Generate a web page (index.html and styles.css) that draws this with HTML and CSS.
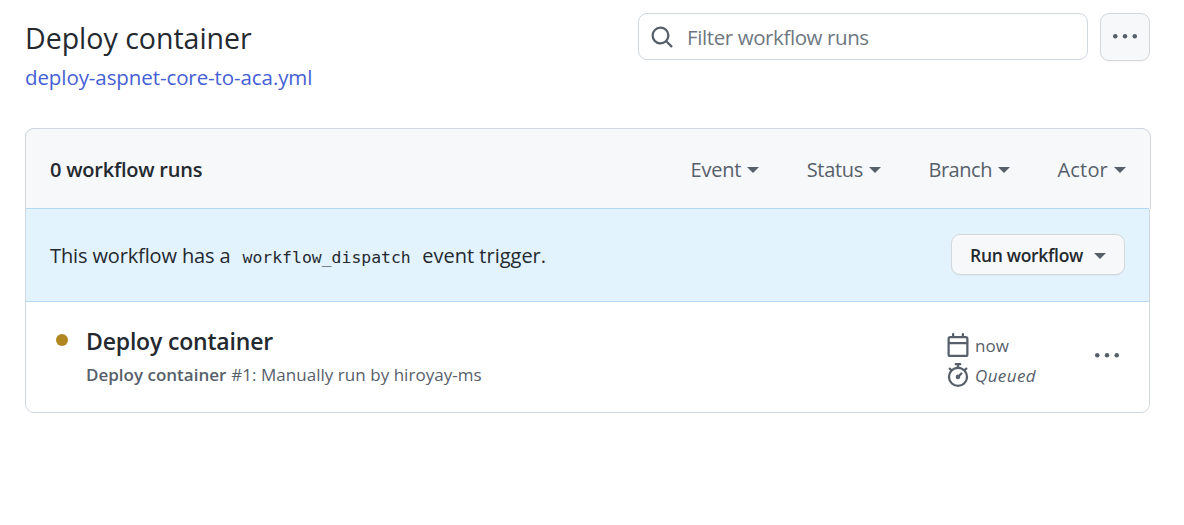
FILE: index.html
```html
<!DOCTYPE html>
<html lang="en">
<head>
<meta charset="utf-8">
<title>Deploy container</title>
<link rel="stylesheet" href="styles.css">
</head>
<body>
<main class="page">
  <header class="top">
    <div class="heading">
      <h1 class="title"><span>Deploy container</span></h1>
      <a class="file"><span>deploy-aspnet-core-to-aca.yml</span></a>
    </div>
    <div class="search">
      <svg class="icon" viewBox="0 0 16 16"><path d="M10.68 11.74a6 6 0 0 1-7.922-8.982 6 6 0 0 1 8.982 7.922l3.04 3.04a.749.749 0 0 1-.326 1.275.749.749 0 0 1-.734-.215ZM11.5 7a4.499 4.499 0 1 0-8.997 0A4.499 4.499 0 0 0 11.5 7Z"/></svg>
      <span class="placeholder">Filter workflow runs</span>
    </div>
    <div class="more">
      <svg class="icon" viewBox="0 0 16 16"><circle cx="1.5" cy="7.5" r="1.5"/><circle cx="8" cy="7.5" r="1.5"/><circle cx="14.5" cy="7.5" r="1.5"/></svg>
    </div>
  </header>

  <section class="card">
    <div class="card-head">
      <strong class="count">0 workflow runs</strong>
      <nav class="filters">
        <span class="filter"><span class="event">Event</span><i class="caret"></i></span>
        <span class="filter"><span class="status">Status</span><i class="caret"></i></span>
        <span class="filter"><span class="branch">Branch</span><i class="caret"></i></span>
        <span class="filter"><span class="actor">Actor</span><i class="caret"></i></span>
      </nav>
    </div>
    <div class="dispatch">
      <div class="message"><span class="lead">This workflow has a</span><code class="code">workflow_dispatch</code><span class="tail">event trigger.</span></div>
      <div class="run-button"><span>Run workflow</span><i class="caret"></i></div>
    </div>
    <div class="run">
      <i class="dot"></i>
      <div class="run-info">
        <div class="run-title"><span>Deploy container</span></div>
        <div class="run-sub"><b class="run-name">Deploy container</b><span class="run-desc">#1: Manually run by hiroyay-ms</span></div>
      </div>
      <div class="meta">
        <div class="meta-row">
          <svg class="icon" viewBox="0 0 16 16"><path d="M4.75 0a.75.75 0 0 1 .75.75V2h5V.75a.75.75 0 0 1 1.5 0V2h1.25c.966 0 1.75.784 1.75 1.75v10.5A1.75 1.75 0 0 1 13.25 16H2.75A1.75 1.75 0 0 1 1 14.25V3.75C1 2.784 1.784 2 2.75 2H4V.75A.75.75 0 0 1 4.75 0ZM2.5 7.5v6.75c0 .138.112.25.25.25h10.5a.25.25 0 0 0 .25-.25V7.5Zm10.75-4H2.75a.25.25 0 0 0-.25.25V6h11V3.75a.25.25 0 0 0-.25-.25Z"/></svg>
          <span class="now">now</span>
        </div>
        <div class="meta-row">
          <svg class="icon" viewBox="0 0 16 16"><path d="M5.75.75A.75.75 0 0 1 6.5 0h3a.75.75 0 0 1 0 1.5h-.75v1l-.001.041a6.724 6.724 0 0 1 3.464 1.435l.007-.006.75-.75a.749.749 0 0 1 1.275.326.749.749 0 0 1-.215.734l-.75.75-.006.007a6.75 6.75 0 1 1-10.548 0L2.72 5.03l-.75-.75a.751.751 0 0 1 .018-1.042.751.751 0 0 1 1.042-.018l.75.75.007.006A6.72 6.72 0 0 1 7.25 2.541V1.5H6.5a.75.75 0 0 1-.75-.75ZM8 14.5a5.25 5.25 0 1 0 0-10.5 5.25 5.25 0 0 0 0 10.5Zm.389-6.7 1.33-1.33a.75.75 0 1 1 1.061 1.06L9.45 8.861A1.503 1.503 0 0 1 8 10.75a1.499 1.499 0 1 1 .389-2.95Z"/></svg>
          <em class="queued">Queued</em>
        </div>
      </div>
      <svg class="icon run-more" viewBox="0 0 16 16"><circle cx="1.5" cy="7.5" r="1.5"/><circle cx="8" cy="7.5" r="1.5"/><circle cx="14.5" cy="7.5" r="1.5"/></svg>
    </div>
  </section>
</main>
</body>
</html>
```
FILE: styles.css
```css
* { box-sizing: border-box; }
body {
  margin: 0;
  background: #fff;
  color: #24292f;
  font-family: "Open Sans", "Noto Sans", sans-serif;
  font-size: 20px;
  white-space: nowrap;
}
.page { padding: 13px 34px 0 25px; }
.icon { display: block; flex: none; width: 24px; height: 24px; fill: #57606a; }
.caret {
  flex: none;
  border: 6px solid transparent;
  border-top-color: #57606a;
  border-bottom: 0;
}

.top { display: flex; align-items: flex-start; height: 115px; }
.heading { width: 613px; }
.title { margin: 0; font-size: 28.5px; font-weight: 400; line-height: 50px; }
.file { display: block; color: #4560d4; font-size: 20.5px; letter-spacing: -.09px; line-height: 28px; }
.search {
  display: flex;
  align-items: center;
  gap: 13px;
  width: 450px;
  height: 47px;
  padding-left: 11px;
  border: 1px solid #d0d7de;
  border-radius: 9px;
}
.placeholder { padding-top: 1px; color: #6e7781; font-size: 20.5px; letter-spacing: -.4px; }
.more {
  display: flex;
  align-items: center;
  justify-content: center;
  width: 50px;
  height: 48px;
  margin-left: 12px;
  border: 1px solid #d5d8da;
  border-radius: 9px;
  background: #f6f8fa;
  box-shadow: 0 1px 0 rgba(27, 31, 36, .04);
}

.card {
  width: 1125px;
  height: 285px;
  border: 1px solid #d0d7de;
  border-radius: 9px;
}
.card-head {
  display: flex;
  align-items: center;
  justify-content: space-between;
  width: 1126px;
  height: 81px;
  margin: -1px 0 0 -1px;
  padding: 1px 24px 0 24px;
  border: 1px solid #d0d7de;
  border-bottom: 0;
  border-radius: 9px 9px 0 0;
  background: #f6f8fa;
}
.count { font-weight: 600; letter-spacing: -.22px; }
.filters { display: flex; gap: 47.4px; color: #57606a; }
.filter { display: flex; align-items: center; gap: 6px; }
.filter .caret { margin-top: 1px; }
.event { letter-spacing: -.2px; }
.status { letter-spacing: -.3px; }
.branch { letter-spacing: -.45px; }
.actor { letter-spacing: .2px; }
.dispatch {
  display: flex;
  align-items: center;
  justify-content: space-between;
  height: 94px;
  margin-top: -1px;
  padding: 0 24px;
  border: solid #b6d9f8;
  border-width: 1px 0;
  background: #e2f3fe;
}
.message { display: flex; align-items: baseline; }
.lead { letter-spacing: -.13px; }
.code { margin: 0 11.5px 0 12px; font-family: "DejaVu Sans Mono", monospace; font-size: 16.45px; }
.run-button {
  display: flex;
  align-items: center;
  gap: 11px;
  width: 174px;
  height: 41px;
  margin-bottom: 1px;
  padding: 1px 0 0 18px;
  border: 1px solid #d5d8da;
  border-radius: 9px;
  background: #f6f8fa;
  box-shadow: 0 1px 0 rgba(27, 31, 36, .04);
  font-size: 17.5px;
  font-weight: 600;
  letter-spacing: -.3px;
}
.run-button .caret { margin-top: 2px; }
.run { display: flex; align-items: flex-start; padding: 21px 30px 0; }
.dot { width: 12px; height: 12px; margin-top: 11px; border-radius: 50%; background: #b08620; }
.run-info { width: 860px; margin-left: 18px; }
.run-title { font-size: 23px; font-weight: 600; letter-spacing: -.18px; line-height: 36px; }
.run-sub { display: flex; gap: 5px; padding-top: 1px; color: #57606a; font-size: 17px; line-height: 30px; }
.run-name { font-weight: 600; }
.run-desc { letter-spacing: .03px; }
.meta { width: 149px; padding-top: 10px; color: #57606a; font-size: 17px; }
.meta-row { display: flex; align-items: center; gap: 5px; height: 24px; margin-bottom: 6px; line-height: 24px; }
.now { padding-top: 2px; }
.queued { padding-top: 1px; letter-spacing: .4px; }
.run-more { margin-top: 21px; }
```
